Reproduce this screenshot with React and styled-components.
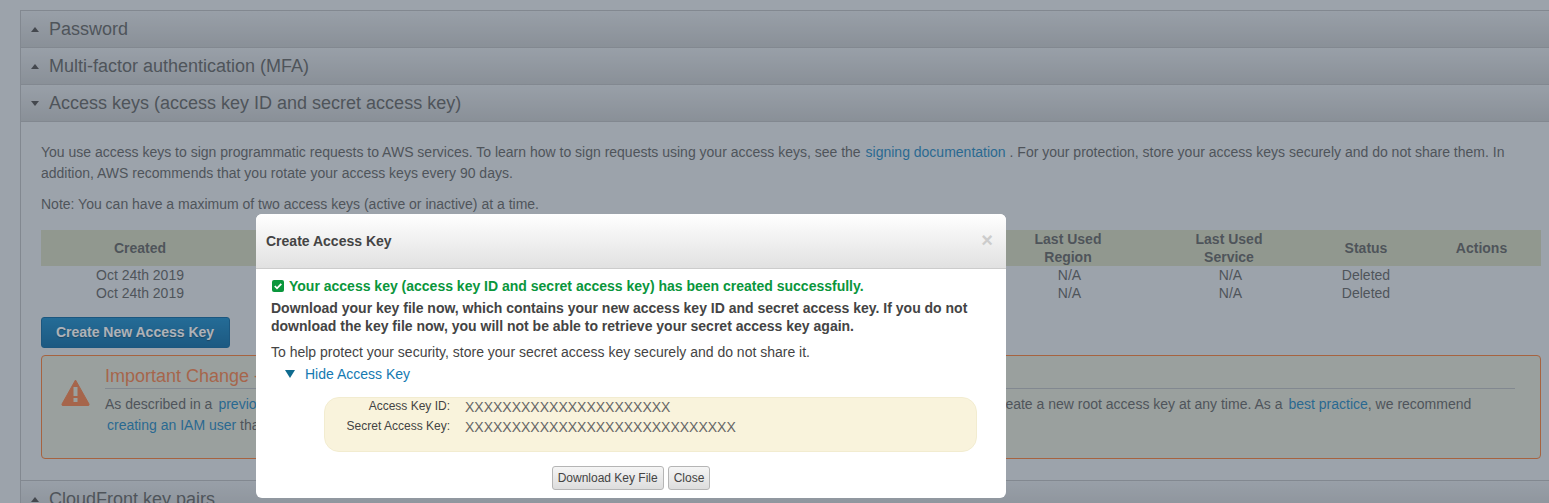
import React from 'react'
import styled, { createGlobalStyle } from 'styled-components'

const GlobalStyle = createGlobalStyle`
  html, body {
    margin: 0;
    height: 100%;
    overflow: hidden;
    background: #d5dade;
    color: #555858;
    font-family: "Liberation Sans", Arial, sans-serif;
    font-size: 14px;
  }
`

const Page = styled.div`
  padding: 10px 0 0 20px;
  width: 1549px;
  box-sizing: border-box;
`

const Accordion = styled.div`
  border: 1px solid #aaadb1;
  border-right: none;
`

const SectionHeader = styled.div`
  height: 36px;
  display: flex;
  align-items: center;
  gap: 10px;
  padding-left: 10px;
  font-size: 18px;
  color: #555858;
  background: linear-gradient(#d0d5d9, #b7bbbe);
  border-bottom: 1px solid #aaadb1;
`

const Arrow = styled.span`
  width: 0;
  height: 0;
  border-left: 4.5px solid transparent;
  border-right: 4.5px solid transparent;
  ${p => (p.$open ? 'border-top: 5px solid #444;' : 'border-bottom: 5px solid #444;')}
`

const SectionBody = styled.div`
  padding: 20px 8px 21px 20px;
  border-bottom: 1px solid #aaadb1;
`

const Para = styled.p`
  margin: 0 0 10px;
  line-height: 21px;
`

const Link = styled.a`
  color: #147ab2;
  margin-left: ${p => p.$lead || 0}px;
`

const KeyTable = styled.table`
  width: 1500px;
  margin-top: 15px;
  border-collapse: collapse;
  table-layout: fixed;
  text-align: center;
  line-height: 18px;

  th {
    background: #c4c9b0;
    height: 36px;
    padding: 0;
    font-weight: bold;
  }
  td {
    height: 18px;
    padding: 0;
  }
`

const NaCell = styled.td`
  && {
    padding-left: 3px;
  }
`

const PrimaryButton = styled.button`
  display: block;
  width: 189px;
  height: 31px;
  margin-top: 15px;
  background: linear-gradient(#0f7fbc, #006099);
  border: 1px solid #005d94;
  border-radius: 3px;
  color: #f4f4f4;
  font: bold 14px "Liberation Sans", Arial, sans-serif;
  text-shadow: 0 1px 1px rgba(0, 0, 0, 0.4);
  padding: 0 1px 2px 0;
`

const Notice = styled.div`
  width: 1500px;
  height: 104px;
  margin-top: 7px;
  box-sizing: border-box;
  border: 1px solid #e6702c;
  border-radius: 4px;
  background: #d2d5c8;
  display: flex;
  padding: 9px 25px 0 19px;
  gap: 15px;
`

const NoticeIcon = styled.svg`
  width: 29px;
  height: 27px;
  margin-top: 14px;
  flex: none;
`

const NoticeMain = styled.div`
  flex: 1;
`

const NoticeTitle = styled.div`
  font-size: 18px;
  line-height: 23px;
  color: #e6743e;
  border-bottom: 1px solid #aaadb1;
  margin-bottom: 5px;
`

const NoticeText = styled.div`
  line-height: 21px;
`

const Backdrop = styled.div`
  position: fixed;
  inset: 0;
  background: rgba(70, 80, 95, 0.4);
`

const Modal = styled.div`
  position: absolute;
  left: 256px;
  top: 214px;
  width: 750px;
  height: 284px;
  background: #fff;
  border-radius: 6px;
  color: #444;
  overflow: hidden;
`

const ModalHeader = styled.div`
  height: 55px;
  box-sizing: border-box;
  display: flex;
  align-items: center;
  justify-content: space-between;
  padding: 0 13px 0 10px;
  background: linear-gradient(#fff, #e1e1e1);
  border-bottom: 1px solid #ccc;
  font-weight: bold;
`

const CloseMark = styled.span`
  color: #ccc;
  font: bold 20px "Liberation Sans", Arial, sans-serif;
  line-height: 1;
  margin-bottom: 3px;
`

const ModalBody = styled.div`
  padding: 8px 15px 0;
`

const SuccessLine = styled.div`
  display: flex;
  align-items: center;
  gap: 5px;
  color: #0a963c;
  font-weight: bold;
  line-height: 18px;
  padding-left: 1px;
`

const Warning = styled.div`
  font-weight: bold;
  line-height: 18px;
  margin-top: 4px;
`

const Help = styled.div`
  line-height: 18px;
  margin-top: 8px;
`

const Toggle = styled.div`
  display: flex;
  align-items: center;
  gap: 10px;
  padding-left: 14px;
  color: #147ab2;
  line-height: 18px;
  margin-top: 4px;
`

const ToggleArrow = styled.span`
  width: 0;
  height: 0;
  border-left: 5.5px solid transparent;
  border-right: 5.5px solid transparent;
  border-top: 8px solid #0f6b8f;
`

const KeyBox = styled.div`
  width: 653px;
  height: 55px;
  box-sizing: border-box;
  margin: 14px 0 0 53px;
  background: #f9f3dc;
  border: 1px solid #f2ecd0;
  border-radius: 15px;
  display: grid;
  grid-template-columns: 125px 1fr;
  grid-auto-rows: 20px;
  column-gap: 15px;
`

const KeyLabel = styled.div`
  text-align: right;
  font-size: 12px;
  line-height: 16px;
`

const KeyValue = styled.div`
  color: #666;
  line-height: 18px;
`

const Buttons = styled.div`
  display: flex;
  justify-content: center;
  gap: 4px;
  margin-top: 14px;
`

const PlainButton = styled.button`
  height: 24px;
  padding: 0 5px 1px;
  background: linear-gradient(#f5f5f5, #ddd);
  border: 1px solid #b5b5b5;
  border-radius: 3px;
  color: #444;
  font: 12px "Liberation Sans", Arial, sans-serif;
`

const App = () => (
  <>
    <GlobalStyle />
    <Page>
      <Accordion>
        <SectionHeader><Arrow />Password</SectionHeader>
        <SectionHeader><Arrow />Multi-factor authentication (MFA)</SectionHeader>
        <SectionHeader><Arrow $open />Access keys (access key ID and secret access key)</SectionHeader>
        <SectionBody>
          <Para>
            You use access keys to sign programmatic requests to AWS services. To learn how to sign requests using your access keys, see the <Link $lead={1}>signing documentation</Link> . For your protection, store your access keys securely and do not share them. In addition, AWS recommends that you rotate your access keys every 90 days.
          </Para>
          <Para>Note: You can have a maximum of two access keys (active or inactive) at a time.</Para>
          <KeyTable>
            <colgroup>
              <col width="198" />
              <col width="250" />
              <col width="300" />
              <col width="199" />
              <col width="160" />
              <col width="162" />
              <col width="112" />
              <col width="119" />
            </colgroup>
            <thead>
              <tr>
                <th>Created</th>
                <th>Deleted</th>
                <th>Access Key ID</th>
                <th>Last Used</th>
                <th>Last Used<br />Region</th>
                <th>Last Used<br />Service</th>
                <th>Status</th>
                <th>Actions</th>
              </tr>
            </thead>
            <tbody>
              {[0, 1].map(i => (
                <tr key={i}>
                  <td>Oct 24th 2019</td>
                  <td />
                  <td />
                  <td />
                  <NaCell>N/A</NaCell>
                  <NaCell>N/A</NaCell>
                  <td>Deleted</td>
                  <td />
                </tr>
              ))}
            </tbody>
          </KeyTable>
          <PrimaryButton>Create New Access Key</PrimaryButton>
          <Notice>
            <NoticeIcon viewBox="0 0 29 27">
              <path d="M14.5 1 L28 25 Q28.500 26.500 27 26.500 L2 26.500 Q0.500 26.500 1 25 Z" fill="#e6743e" stroke="#e6743e" strokeLinejoin="round" />
              <rect x="12.500" y="8" width="4" height="9" fill="#d2d5c8" />
              <rect x="12.500" y="19" width="4" height="4" fill="#d2d5c8" />
            </NoticeIcon>
            <NoticeMain>
              <NoticeTitle>Important Change - Managing Your AWS Secret Access Keys</NoticeTitle>
              <NoticeText>
                As described in a<Link $lead={6}>previous announcement</Link> , you cannot retrieve the existing secret access keys for your AWS root account, though you can still create a new root access key at any time. As a<Link $lead={6}>best practice</Link>, we recommend
                <br />
                <Link $lead={2}>creating an IAM user</Link> that has access keys rather than relying on root account access keys.
              </NoticeText>
            </NoticeMain>
          </Notice>
        </SectionBody>
        <SectionHeader><Arrow />CloudFront key pairs</SectionHeader>
      </Accordion>
    </Page>
    <Backdrop />
    <Modal>
      <ModalHeader>
        Create Access Key
        <CloseMark>×</CloseMark>
      </ModalHeader>
      <ModalBody>
        <SuccessLine>
          <svg width="12" height="12" viewBox="0 0 12 12">
            <rect width="12" height="12" rx="2" fill="#0a963c" />
            <path d="M2.800 6 L5 8.300 L9.300 3.800" fill="none" stroke="#fff" strokeWidth="1.800" />
          </svg>
          Your access key (access key ID and secret access key) has been created successfully.
        </SuccessLine>
        <Warning>
          Download your key file now, which contains your new access key ID and secret access key. If you do not download the key file now, you will not be able to retrieve your secret access key again.
        </Warning>
        <Help>To help protect your security, store your secret access key securely and do not share it.</Help>
        <Toggle><ToggleArrow />Hide Access Key</Toggle>
        <KeyBox>
          <KeyLabel>Access Key ID:</KeyLabel>
          <KeyValue>XXXXXXXXXXXXXXXXXXXXXX</KeyValue>
          <KeyLabel>Secret Access Key:</KeyLabel>
          <KeyValue>XXXXXXXXXXXXXXXXXXXXXXXXXXXXX</KeyValue>
        </KeyBox>
        <Buttons>
          <PlainButton>Download Key File</PlainButton>
          <PlainButton>Close</PlainButton>
        </Buttons>
      </ModalBody>
    </Modal>
  </>
)

export default App
